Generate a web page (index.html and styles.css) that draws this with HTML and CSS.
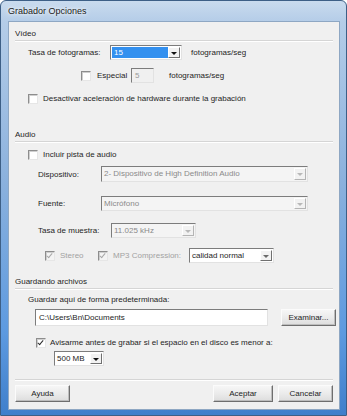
FILE: index.html
```html
<!DOCTYPE html>
<html lang="es">
<head>
    <meta charset="UTF-8">
    <meta name="viewport" content="width=device-width, initial-scale=1.0">
    <title>Grabador Opciones</title>
    <link rel="stylesheet" href="styles.css">
</head>
<body>
    <div class="window">
        <div class="titlebar">Grabador Opciones</div>
        <div class="client">

            <div class="group-head">Vídeo</div>
            <div class="row row-rate">
                <span class="lbl lbl-rate">Tasa de fotogramas:</span>
                <div class="combo combo-rate"><span class="val"><span class="sel">15</span></span><span class="drop"></span></div>
                <span class="unit">fotogramas/seg</span>
            </div>
            <div class="row row-special">
                <span class="check"></span>
                <span class="txt">Especial</span>
                <div class="field field-special">5</div>
                <span class="unit">fotogramas/seg</span>
            </div>
            <div class="row row-hw">
                <span class="check"></span>
                <span class="txt">Desactivar aceleración de hardware durante la grabación</span>
            </div>

            <div class="group-head group-audio">Audio</div>
            <div class="row row-track">
                <span class="check"></span>
                <span class="txt">Incluir pista de audio</span>
            </div>
            <div class="row row-device">
                <span class="lbl lbl-audio">Dispositivo:</span>
                <div class="combo disabled combo-wide"><span class="val">2- Dispositivo de High Definition Audio</span><span class="drop"></span></div>
            </div>
            <div class="row row-source">
                <span class="lbl lbl-audio">Fuente:</span>
                <div class="combo disabled combo-wide"><span class="val">Micrófono</span><span class="drop"></span></div>
            </div>
            <div class="row row-sample">
                <span class="lbl lbl-sample">Tasa de muestra:</span>
                <div class="combo disabled combo-sample"><span class="val">11.025 kHz</span><span class="drop"></span></div>
            </div>
            <div class="row row-stereo">
                <span class="check checked disabled"></span>
                <span class="txt muted stereo-txt">Stereo</span>
                <span class="check checked disabled"></span>
                <span class="txt muted mp3-txt">MP3 Compression:</span>
                <div class="combo combo-quality"><span class="val">calidad normal</span><span class="drop"></span></div>
            </div>

            <div class="group-head group-save">Guardando archivos</div>
            <div class="row row-default">
                <span class="txt">Guardar aquí de forma predeterminada:</span>
            </div>
            <div class="row row-path">
                <div class="field field-path">C:\Users\Bn\Documents</div>
                <button class="btn btn-browse">Examinar...</button>
            </div>
            <div class="row row-warn">
                <span class="check checked"></span>
                <span class="txt">Avisarme antes de grabar si el espacio en el disco es menor a:</span>
            </div>
            <div class="row row-size">
                <div class="combo combo-size"><span class="val">500 MB</span><span class="drop"></span></div>
            </div>

            <div class="divider"></div>
            <div class="footer">
                <button class="btn">Ayuda</button>
                <span class="spacer"></span>
                <button class="btn btn-ok">Aceptar</button>
                <button class="btn">Cancelar</button>
            </div>
        </div>
    </div>
</body>
</html>
```

FILE: styles.css
```css
body {
    margin: 0;
    font-family: "Liberation Sans", Arial, sans-serif;
    font-size: 8px;
    color: #1e1e1e;
    background: #ffffff;
}
.window {
    width: 347px;
    height: 416px;
    box-sizing: border-box;
    padding: 0 6px 5px 7px;
    background: linear-gradient(180deg, #c9dbee 0, #b5cde8 20px, #89b0dd 45%, #5d9ae0 80%, #3f7fcb 100%);
    border: 1px solid #3d5f86;
    border-radius: 6px 6px 0 0;
    display: flex;
    flex-direction: column;
}
.titlebar {
    height: 20px;
    line-height: 20px;
    padding-left: 0;
    font-size: 9px;
    color: #1a1a1a;
    text-shadow: 0 0 6px #ffffff, 0 0 3px #ffffff;
}
.client {
    flex: 1;
    background: #f0f0f0;
    border: 1px solid #8ea7c3;
    padding: 0 6px;
    display: flex;
    flex-direction: column;
}

.group-head {
    height: 19px;
    box-sizing: border-box;
    padding-top: 6px;
    line-height: 12px;
    border-bottom: 1px solid #d5d5d5;
    box-shadow: 0 1px 0 #ffffff;
    flex: none;
}
.group-audio { margin-top: 18px; }
.group-save { margin-top: 7px; }

.row {
    display: flex;
    align-items: center;
    height: 15px;
    flex: none;
}
.txt, .lbl, .unit { white-space: nowrap; }
.muted { color: #a2a2a2; }

.row-rate { margin-top: 4px; }
.lbl-rate { margin-left: 13px; width: 82px; }
.row-rate .unit { margin-left: 9px; }

.row-special { margin-top: 8px; padding-left: 66px; }
.row-special .txt { margin-left: 6px; width: 34px; }
.row-special .unit { margin-left: 15px; }

.row-hw { margin-top: 9px; height: 13px; padding-left: 13px; }
.row-hw .txt, .row-track .txt { margin-left: 5px; }
.row-track { margin-top: 6px; height: 13px; padding-left: 13px; }

.row-device { margin-top: 5px; height: 16px; }
.row-source { margin-top: 14px; }
.row-sample { margin-top: 12px; }
.lbl-audio { margin-left: 23px; width: 63px; }
.lbl-sample { margin-left: 23px; width: 73px; }

.row-stereo { margin-top: 10px; padding-left: 30px; }
.stereo-txt { margin-left: 5px; width: 38px; }
.mp3-txt { margin-left: 5px; width: 71px; }

.row-default { margin-top: 4px; height: 13px; padding-left: 13px; }
.row-path { margin-top: 3px; height: 17px; padding-left: 20px; }
.row-warn { margin-top: 10px; height: 13px; padding-left: 21px; }
.row-warn .txt { margin-left: 4px; }
.row-size { margin-top: 2px; padding-left: 39px; }

/* checkbox */
.check {
    width: 10px;
    height: 10px;
    box-sizing: border-box;
    flex: none;
    background: #ffffff;
    border: 1px solid;
    border-color: #8d8d8d #e6e6e6 #e6e6e6 #8d8d8d;
    box-shadow: inset 1px 1px 0 #cfcfcf;
    position: relative;
}
.check.checked::after {
    content: "";
    position: absolute;
    left: 2px;
    top: 0px;
    width: 2px;
    height: 5px;
    border: solid #2b2b2b;
    border-width: 0 1.5px 1.5px 0;
    transform: rotate(40deg);
}
.check.disabled { background: #f4f4f4; }
.check.disabled::after { border-color: #a8a8a8; }

/* combo boxes */
.combo {
    display: flex;
    height: 15px;
    box-sizing: border-box;
    background: #ffffff;
    border: 1px solid;
    border-color: #7c7c7c #e2e2e2 #e2e2e2 #7c7c7c;
    flex: none;
}
.combo .val {
    flex: 1;
    padding-left: 2px;
    line-height: 13px;
    white-space: nowrap;
    overflow: hidden;
}
.combo .drop {
    width: 12px;
    flex: none;
    box-sizing: border-box;
    margin: 1px 1px 1px 0;
    background: #f2f2f2;
    border: 1px solid;
    border-color: #ffffff #707070 #707070 #ffffff;
    position: relative;
}
.combo .drop::after {
    content: "";
    position: absolute;
    left: 2px;
    top: 4px;
    border-style: solid;
    border-width: 3px 3px 0 3px;
    border-color: #111111 transparent transparent transparent;
}
.combo.disabled { background: #f4f4f4; }
.combo.disabled .val { color: #8a8a8a; }
.combo.disabled .drop { border-color: #ffffff #b4b4b4 #b4b4b4 #ffffff; }
.combo.disabled .drop::after { border-top-color: #b8b8b8; }

.combo-rate { width: 72px; }
.combo-rate .val { padding: 1px 0 1px 1px; line-height: 11px; }
.combo-rate .sel {
    display: block;
    height: 11px;
    padding-left: 2px;
    background: #3390ef;
    color: #ffffff;
}
.combo-wide { width: 207px; height: 16px; }
.row-source .combo-wide { height: 15px; }
.combo-sample { width: 85px; }
.combo-quality { width: 85px; margin-left: 5px; }
.combo-quality .drop::after { border-top-color: #6a6a6a; }
.combo-size { width: 50px; }

/* text fields */
.field {
    height: 15px;
    box-sizing: border-box;
    border: 1px solid;
    border-color: #7c7c7c #e2e2e2 #e2e2e2 #7c7c7c;
    line-height: 13px;
    padding-left: 3px;
    white-space: nowrap;
    flex: none;
}
.field-special { width: 23px; background: #f0f0f0; color: #9a9a9a; }
.field-path { width: 233px; height: 17px; line-height: 15px; background: #ffffff; }

/* buttons */
.btn {
    font: inherit;
    color: #1e1e1e;
    height: 17px;
    width: 55px;
    padding: 0;
    background: linear-gradient(180deg, #f6f6f6 0, #ebebeb 50%, #dddddd 100%);
    border: 1px solid;
    border-color: #fbfbfb #6e6e6e #6e6e6e #fbfbfb;
    box-shadow: inset -1px -1px 0 #bdbdbd;
    flex: none;
}
.btn-browse { margin-left: 13px; height: 17px; }
.btn-ok { width: 60px; margin-right: 5px; }

.divider {
    margin-top: 13px;
    height: 0;
    border-top: 1px solid #d5d5d5;
    box-shadow: 0 1px 0 #ffffff;
    flex: none;
}
.footer {
    margin-top: 5px;
    display: flex;
    height: 17px;
}
.spacer { flex: 1; }
```
